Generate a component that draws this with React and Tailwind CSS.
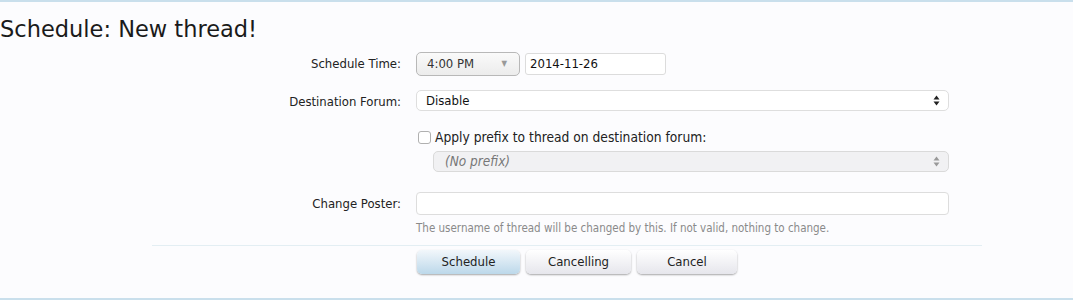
import React from "react";

function UpDown({ color = "#222" }) {
  return (
    <svg width="7" height="11" viewBox="0 0 7 11" className="shrink-0">
      <path d="M3.5 0.5 L6.5 4.5 L0.5 4.5 Z" fill={color} />
      <path d="M3.5 10.5 L6.5 6.5 L0.5 6.5 Z" fill={color} />
    </svg>
  );
}

function Row({ label, children, className = "" }) {
  return (
    <div className={"flex items-start " + className}>
      <div className="w-[401px] shrink-0 text-right text-[13px] text-[#222] leading-[24px]">
        {label}
      </div>
      <div className="ml-[15px] w-[533px]">{children}</div>
    </div>
  );
}

export default function App() {
  return (
    <div
      className="w-[1073px] h-[300px] bg-[#fcfcfe] border-t-2 border-b-2 border-[#c9dfec] overflow-hidden"
      style={{ fontFamily: '"DejaVu Sans Condensed", "DejaVu Sans", sans-serif' }}
    >
      <h1
        className="text-[22.5px] leading-[26px] text-[#1a1a1a] mt-[14px]"
        style={{ fontFamily: '"DejaVu Sans", sans-serif' }}
      >
        Schedule: New thread!
      </h1>

      <div className="mt-[10px]">
        <Row label="Schedule Time:">
          <div className="flex items-center gap-[5px]">
            <div className="w-[104px] h-[24px] rounded-[5px] border border-[#b8b8b8] bg-gradient-to-b from-[#fafafa] to-[#ececec] flex items-center justify-between pl-[10px] pr-[12px] text-[13px] text-[#333]">
              <span>4:00 PM</span>
              <span className="text-[8px] text-[#999]">▼</span>
            </div>
            <div className="w-[141px] h-[22px] rounded-[3px] border border-[#dcdcdc] bg-white flex items-center pl-[4px] text-[13px] text-[#111]">
              2014-11-26
            </div>
          </div>
        </Row>

        <Row label="Destination Forum:" className="mt-[14px]">
          <div className="h-[21px] rounded-[5px] border border-[#dedede] bg-white flex items-center justify-between pl-[9px] pr-[8px] text-[13px] text-[#111]">
            <span>Disable</span>
            <UpDown />
          </div>
        </Row>

        <div className="flex mt-[13px]">
          <div className="w-[416px] shrink-0" />
          <div className="w-[533px]">
            <label className="flex items-center gap-[4px] text-[13.7px] text-[#222] ml-[2px]">
              <span className="w-[13px] h-[13px] rounded-[3px] border border-[#b0b0b0] bg-white" />
              <span>Apply prefix to thread on destination forum:</span>
            </label>
            <div className="mt-[3px] ml-[17px] h-[21px] rounded-[5px] border border-[#dadada] bg-[#f1f1f3] flex items-center justify-between pl-[11px] pr-[8px] text-[13.5px] italic text-[#777]">
              <span>(No prefix)</span>
              <UpDown color="#999" />
            </div>
          </div>
        </div>

        <Row label="Change Poster:" className="mt-[20px]">
          <div className="h-[23px] rounded-[4px] border border-[#dddddd] bg-white" />
          <div className="mt-[5px] text-[11.5px] text-[#8a8a8a]">
            The username of thread will be changed by this. If not valid, nothing to change.
          </div>
        </Row>

        <div className="ml-[152px] w-[830px] h-px bg-[#e3eef3] mt-[8px]" />

        <div className="flex gap-[6px] ml-[417px] mt-[4px]">
          <button className="w-[103px] h-[24px] rounded-[5px] bg-gradient-to-b from-[#f2f7fb] to-[#bcd8ea] shadow-[0_1px_2px_rgba(0,0,0,0.35)] text-[13px] text-[#222]">
            Schedule
          </button>
          <button className="w-[105px] h-[24px] rounded-[5px] bg-gradient-to-b from-[#ffffff] to-[#e6e6ec] shadow-[0_1px_2px_rgba(0,0,0,0.35)] text-[13px] text-[#222]">
            Cancelling
          </button>
          <button className="w-[100px] h-[24px] rounded-[5px] bg-gradient-to-b from-[#ffffff] to-[#e6e6ec] shadow-[0_1px_2px_rgba(0,0,0,0.35)] text-[13px] text-[#222]">
            Cancel
          </button>
        </div>
      </div>
    </div>
  );
}
